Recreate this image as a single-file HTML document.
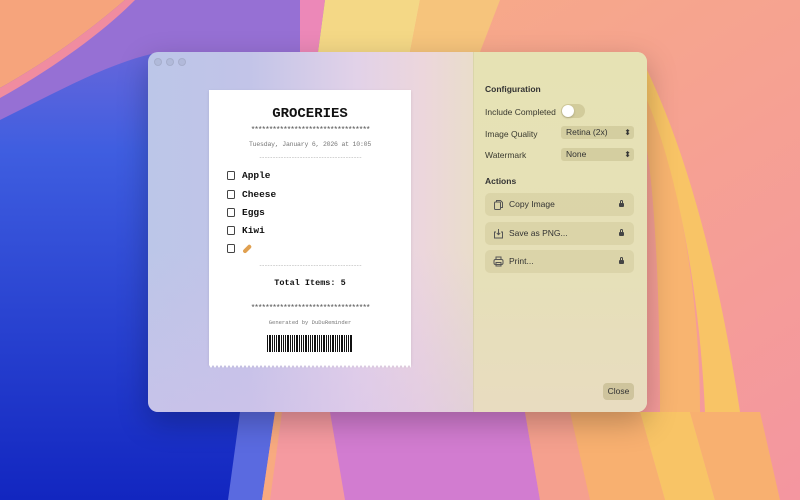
<!DOCTYPE html>
<html><head><style>
*{margin:0;padding:0;box-sizing:border-box}
body{width:800px;height:500px;overflow:hidden;position:relative;font-family:"Liberation Sans",sans-serif;background:#f6a882}
.bg{position:absolute;inset:0}
.win{position:absolute;left:148px;top:52px;width:499px;height:360px;border-radius:10px;overflow:hidden;
background:linear-gradient(90deg,#bcc6e8 0%,#c2c4e8 20%,#e2d2e8 42%,#ecd6dc 55%,#e9dfc6 68%,#e6e2b6 100%);box-shadow:0 10px 30px rgba(0,0,0,.25)}
.win:before{content:"";position:absolute;inset:0;background:linear-gradient(180deg,rgba(255,255,255,0) 55%,rgba(215,190,235,.4) 100%)}
.side{position:absolute;left:325px;top:0;width:174px;height:360px;background:linear-gradient(180deg,#e6e2b4 0%,#e6e0b8 60%,#e8dcc0 100%);border-left:1px solid rgba(0,0,0,.05)}
.dots{position:absolute;left:6px;top:6px;display:flex;gap:4px}
.dots span{width:8px;height:8px;border-radius:50%;background:rgba(0,0,0,.06);border:1px solid rgba(0,0,0,.07)}
.rc{position:absolute;left:61px;top:38px;width:202px;height:275px;background:#fff;font-family:"Liberation Mono",monospace;color:#111;text-align:center;box-shadow:0 1px 3px rgba(0,0,0,.1)}
.t{position:absolute;left:0;width:100%;white-space:nowrap}
.item{position:absolute;left:18px;font-size:9.5px;font-weight:bold;display:flex;align-items:center;gap:7px}
.cb{width:8px;height:9px;border:1.2px solid #444;border-radius:1.5px}
.h{position:absolute;left:337px;font-size:8.5px;font-weight:bold;color:#333}
.lbl{position:absolute;left:337px;font-size:8.5px;color:#3a3a30}
.sel{position:absolute;left:413px;width:73px;height:13px;border-radius:3px;background:rgba(150,140,80,.22);font-size:8.5px;color:#333;padding:1px 5px;line-height:11px}
.sel:after{content:"⬍";position:absolute;right:3px;top:1px;font-size:8px}
.btn{position:absolute;left:337px;width:149px;height:23px;border-radius:5px;background:rgba(160,150,90,.15);font-size:8.5px;color:#333;line-height:23px;padding-left:24px}
.btn svg{position:absolute;left:8px;top:6px}
.btn .lk{position:absolute;right:10px;top:10px;width:5px;height:4px;background:#444;border-radius:1px}
.btn .lk:before{content:"";position:absolute;left:1px;top:-3px;width:3px;height:3px;border:1px solid #444;border-bottom:none;border-radius:2px 2px 0 0;box-sizing:border-box}
</style></head><body>
<svg class="bg" width="800" height="500" viewBox="0 0 800 500">
<defs>
<linearGradient id="b" x1="0" y1="0" x2="0" y2="1"><stop offset="0" stop-color="#7a6ad8"/><stop offset=".3" stop-color="#3f5ee0"/><stop offset="1" stop-color="#1226c0"/></linearGradient>
<linearGradient id="r" x1="0" y1="0" x2="1" y2="1"><stop offset="0" stop-color="#f8b080"/><stop offset="1" stop-color="#f496a0"/></linearGradient>
</defs>
<rect width="800" height="500" fill="url(#r)"/>
<path d="M0 0 L330 0 L320 60 L300 140 L280 420 L245 500 L0 500Z" fill="url(#b)"/>
<path d="M130 0 L320 0 L310 52 L160 52 C120 60 80 80 40 100 L0 120 L0 95 C50 60 100 30 130 0Z" fill="#9670d4"/>
<path d="M0 0 L125 0 C90 30 50 60 0 88Z" fill="#f6a47c"/>
<path d="M0 88 C50 60 90 30 125 0 L135 0 C100 35 50 70 0 98Z" fill="#f08ca0"/>
<path d="M300 0 L325 0 L318 52 L300 52Z" fill="#ec88b8"/>
<path d="M325 0 L420 0 L410 52 L318 52Z" fill="#f4d886"/>
<path d="M420 0 L500 0 L480 52 L410 52Z" fill="#f6c47c"/>
<path d="M240 412 L275 412 L265 500 L228 500Z" fill="#5a6ae0"/>
<path d="M275 412 L330 412 L345 500 L262 500Z" fill="#f59aa0"/>
<path d="M275 412 L282 412 L270 500 L262 500Z" fill="#f8aa80"/>
<path d="M330 412 L525 412 L540 500 L345 500Z" fill="#d27cd0"/>
<path d="M525 412 L570 412 L590 500 L540 500Z" fill="#f5a08e"/>
<path d="M570 412 L640 412 L665 500 L590 500Z" fill="#f8b070"/>
<path d="M640 412 L690 412 L715 500 L665 500Z" fill="#f8c466"/>
<path d="M690 412 L760 412 L780 500 L715 500Z" fill="#f8b070"/>
<path d="M647 90 C680 180 700 300 700 412 L660 412 C660 300 655 200 647 150Z" fill="#f8b470"/>
<path d="M647 70 C690 160 720 280 740 412 L705 412 C700 300 680 180 647 100Z" fill="#f8c466"/>
</svg>
<div class="win">
<div class="side"></div>
<div class="dots"><span></span><span></span><span></span></div>
<div class="rc">
<div class="t" style="top:16px;font-size:14px;font-weight:bold">GROCERIES</div>
<div class="t" style="top:36px;font-size:8px;color:#555;letter-spacing:-1.2px">*********************************</div>
<div class="t" style="top:51px;font-size:6.5px;color:#777;letter-spacing:-0.2px">Tuesday, January 6, 2026 at 10:05</div>
<div class="t" style="top:64px;font-size:6px;color:#aaa;letter-spacing:-0.9px">--------------------------------------</div>
<div class="item" style="top:80px"><span class="cb"></span>Apple</div>
<div class="item" style="top:99px"><span class="cb"></span>Cheese</div>
<div class="item" style="top:117px"><span class="cb"></span>Eggs</div>
<div class="item" style="top:135px"><span class="cb"></span>Kiwi</div>
<div class="item" style="top:154px"><span class="cb"></span><span style="display:inline-block;width:10px;height:3.5px;background:#e0a050;transform:rotate(-45deg);border-radius:2px"></span></div>
<div class="t" style="top:172px;font-size:6px;color:#aaa;letter-spacing:-0.9px">--------------------------------------</div>
<div class="t" style="top:188px;font-size:8.5px;font-weight:bold">Total Items: 5</div>
<div class="t" style="top:214px;font-size:8px;color:#555;letter-spacing:-1.2px">*********************************</div>
<div class="t" style="top:229px;font-size:5.5px;color:#777">Generated by DuDuReminder</div>
<div style="position:absolute;left:58px;top:245px;width:85px;height:17px;background:repeating-linear-gradient(90deg,#111 0 1px,#fff 1px 2px,#111 2px 4px,#fff 4px 5px,#111 5px 6px,#fff 6px 7px,#111 7px 8px,#fff 8px 9px)"></div>
<svg style="position:absolute;left:0;top:275px" width="202" height="4"><path fill="#fff" d="M0 0 L2 3 L4 0 L6 3 L8 0 L10 3 L12 0 L14 3 L16 0 L18 3 L20 0 L22 3 L24 0 L26 3 L28 0 L30 3 L32 0 L34 3 L36 0 L38 3 L40 0 L42 3 L44 0 L46 3 L48 0 L50 3 L52 0 L54 3 L56 0 L58 3 L60 0 L62 3 L64 0 L66 3 L68 0 L70 3 L72 0 L74 3 L76 0 L78 3 L80 0 L82 3 L84 0 L86 3 L88 0 L90 3 L92 0 L94 3 L96 0 L98 3 L100 0 L102 3 L104 0 L106 3 L108 0 L110 3 L112 0 L114 3 L116 0 L118 3 L120 0 L122 3 L124 0 L126 3 L128 0 L130 3 L132 0 L134 3 L136 0 L138 3 L140 0 L142 3 L144 0 L146 3 L148 0 L150 3 L152 0 L154 3 L156 0 L158 3 L160 0 L162 3 L164 0 L166 3 L168 0 L170 3 L172 0 L174 3 L176 0 L178 3 L180 0 L182 3 L184 0 L186 3 L188 0 L190 3 L192 0 L194 3 L196 0 L198 3 L200 0 L202 3 L202 0Z"/></svg>
</div>
<div class="h" style="top:32px">Configuration</div>
<div class="lbl" style="top:55px">Include Completed</div>
<div style="position:absolute;left:413px;top:52px;width:24px;height:14px;border-radius:7px;background:rgba(150,140,80,.25)"><div style="position:absolute;left:1px;top:1px;width:12px;height:12px;border-radius:50%;background:#fff;box-shadow:0 1px 2px rgba(0,0,0,.2)"></div></div>
<div class="lbl" style="top:77px">Image Quality</div>
<div class="sel" style="top:74px">Retina (2x)</div>
<div class="lbl" style="top:98px">Watermark</div>
<div class="sel" style="top:96px">None</div>
<div class="h" style="top:124px">Actions</div>
<div class="btn" style="top:141px"><svg width="11" height="11" viewBox="0 0 11 11" fill="none" stroke="#555" stroke-width="1"><rect x="1.5" y="3" width="6" height="7.5" rx="1"/><path d="M3.5 3V1.5h4l2 2v5h-2"/></svg>Copy Image<span class="lk"></span></div>
<div class="btn" style="top:170px"><svg width="11" height="11" viewBox="0 0 11 11" fill="none" stroke="#555" stroke-width="1"><path d="M3 4H1.5v6h8V4H8"/><path d="M5.5 1v5.5M3.8 5l1.7 1.7L7.2 5"/></svg>Save as PNG...<span class="lk"></span></div>
<div class="btn" style="top:198px"><svg width="11" height="11" viewBox="0 0 11 11" fill="none" stroke="#555" stroke-width="1"><rect x="1" y="3.5" width="9" height="5" rx="1.5"/><rect x="3" y="1" width="5" height="2.5"/><rect x="3" y="6.5" width="5" height="3.5"/></svg>Print...<span class="lk"></span></div>
<div style="position:absolute;left:455px;top:331px;width:31px;height:17px;border-radius:4px;background:rgba(150,140,80,.3);font-size:8.5px;color:#333;text-align:center;line-height:17px">Close</div>
</div>
</body></html>
